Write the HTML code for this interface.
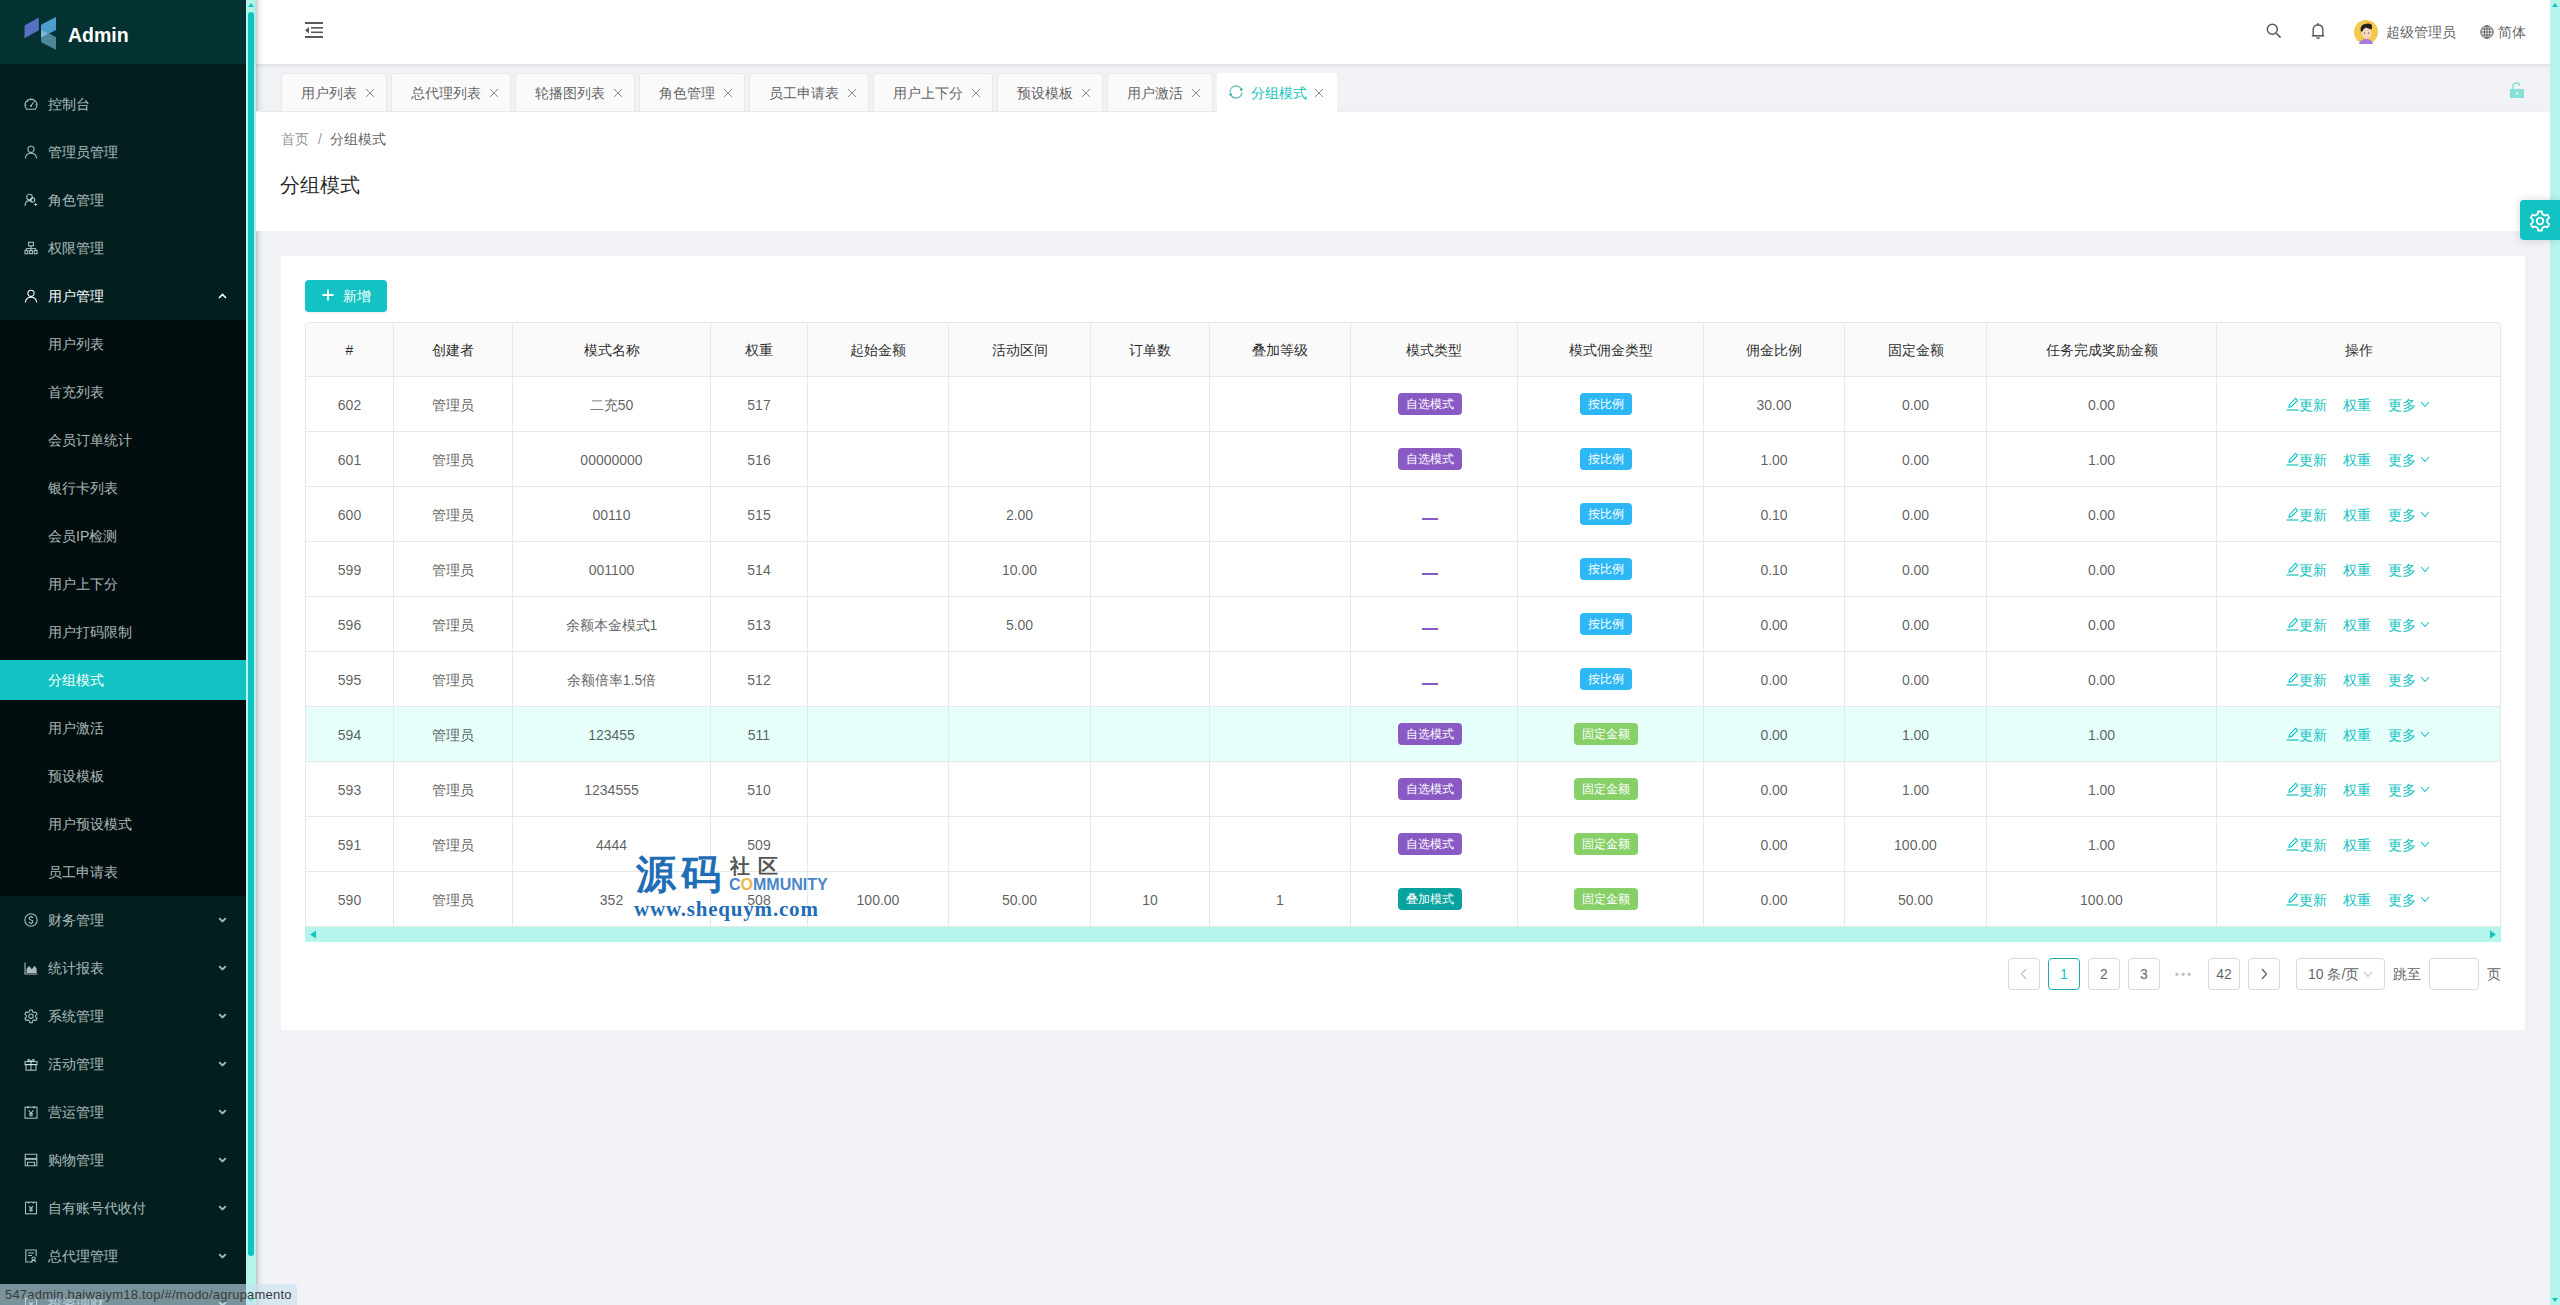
<!DOCTYPE html><html><head><meta charset="utf-8"><title>分组模式</title><style>
*{box-sizing:border-box;margin:0;padding:0}
html,body{width:2560px;height:1305px;overflow:hidden}
body{position:relative;background:#f0f2f5;font-family:"Liberation Sans", sans-serif;font-size:14px;color:rgba(0,0,0,.65)}
.a{position:absolute}
.t{position:absolute;white-space:nowrap;line-height:20px}
.side{left:0;top:0;width:246px;height:1305px;background:#031e1f}
.logo{left:0;top:0;width:246px;height:64px;background:#043232}
.mi{position:absolute;left:0;width:246px;height:40px;line-height:40px;color:rgba(225,240,238,.75);font-size:14px;white-space:nowrap}
.mi .ic{position:absolute;left:24px;top:13px;width:14px;height:14px;overflow:visible}
.mi .tx{position:absolute;left:48px;top:0}
.mi .ar{position:absolute;left:218px;top:17px;width:9px;height:6px}
.hdr{left:256px;top:0;width:2294px;height:64px;background:#fff;box-shadow:0 1px 4px rgba(0,21,41,.12)}
.tab{position:absolute;top:73px;height:39px;background:#fafafa;border:1px solid #e8e8e8;border-bottom:0;border-radius:4px 4px 0 0;color:rgba(0,0,0,.65);font-size:14px}
.tab .tx{position:absolute;left:19px;top:8px;line-height:22px;white-space:nowrap}
.tab .x{position:absolute;top:14px;width:10px;height:10px}
.card{left:281px;top:256px;width:2244px;height:774px;background:#fff}
.cell{position:absolute;text-align:center;white-space:nowrap;line-height:22px}
.tag{position:absolute;height:22px;line-height:22px;border-radius:4px;color:#fff;font-size:12px;text-align:center;white-space:nowrap}
.lk{color:#13c2c2}
.pg{position:absolute;top:958px;width:32px;height:32px;border:1px solid #d9d9d9;border-radius:4px;background:#fff;text-align:center;line-height:30px;color:rgba(0,0,0,.65);font-size:14px}
</style></head><body>
<div class="a side"></div>
<div class="a logo"></div>
<svg class="a" style="left:0;top:0" width="64" height="64" viewBox="0 0 64 64">
<path d="M24.5 25.5 L38.8 17.4 L38.8 30.3 L24.5 38.3 Z" fill="#5670c2"/>
<path d="M41 26 Q41 24.6 42.2 24 L56 17 L56 30 L49.2 33.6 L41 29.2 Z" fill="#4a9fcf"/>
<path d="M41 29.2 L49.2 33.6 L41 38 Z" fill="#79b7df"/>
<path d="M41 38 L49.2 33.6 L56 37.2 L56 49.8 L42.2 42.8 Q41 42.2 41 41 Z" fill="#4d8898"/>
</svg>
<div class="t" style="left:68px;top:22px;line-height:26px;font-size:19.5px;font-weight:bold;color:#fff">Admin</div>
<div class="mi" style="top:84px"><svg class="ic" viewBox="0 0 14 14"><path d="M2.6 12.2 A6 6 0 1 1 11.4 12.2 Z" stroke="currentColor" fill="none" stroke-width="1.1"/><path d="M7 9 L9.5 5.2" stroke="currentColor" fill="none" stroke-width="1.1"/><circle cx="7" cy="9" r="0.9" fill="currentColor"/><path d="M7 2.2v1M3.2 4l.7.7M10.8 4l-.7.7M1.7 8h1M11.3 8h1" stroke="currentColor" fill="none" stroke-width="1.1"/></svg><span class="tx">控制台</span></div>
<div class="mi" style="top:132px"><svg class="ic" viewBox="0 0 14 14"><circle cx="7" cy="4.3" r="3.1" stroke="currentColor" fill="none" stroke-width="1.1"/><path d="M1.3 13.5 Q1.8 8.3 7 8.3 Q12.2 8.3 12.7 13.5" stroke="currentColor" fill="none" stroke-width="1.1"/></svg><span class="tx">管理员管理</span></div>
<div class="mi" style="top:180px"><svg class="ic" viewBox="0 0 14 14"><circle cx="5.5" cy="4" r="2.8" stroke="currentColor" fill="none" stroke-width="1.1"/><path d="M1 13 Q1.3 7.6 5.5 7.6 Q7 7.6 8 8.3" stroke="currentColor" fill="none" stroke-width="1.1"/><circle cx="8.6" cy="7" r="2.1" stroke="currentColor" fill="none" stroke-width="1.1"/><path d="M10 11.5h3.2M11.6 9.9v3.2" stroke="currentColor" fill="none" stroke-width="1.1"/></svg><span class="tx">角色管理</span></div>
<div class="mi" style="top:228px"><svg class="ic" viewBox="0 0 14 14"><rect x="4.6" y="1.3" width="4.8" height="3.6" stroke="currentColor" fill="none" stroke-width="1.1"/><path d="M7 4.9v2.6M2.3 7.5h9.4M2.3 7.5v2M7 7.5v2M11.7 7.5v2" stroke="currentColor" fill="none" stroke-width="1.1"/><rect x="1" y="9.5" width="2.8" height="3.2" stroke="currentColor" fill="none" stroke-width="1.1"/><rect x="5.6" y="9.5" width="2.8" height="3.2" stroke="currentColor" fill="none" stroke-width="1.1"/><rect x="10.2" y="9.5" width="2.8" height="3.2" stroke="currentColor" fill="none" stroke-width="1.1"/></svg><span class="tx">权限管理</span></div>
<div class="mi" style="top:276px;color:#fff"><svg class="ic" viewBox="0 0 14 14"><circle cx="7" cy="4.3" r="3.1" stroke="currentColor" fill="none" stroke-width="1.1"/><path d="M1.3 13.5 Q1.8 8.3 7 8.3 Q12.2 8.3 12.7 13.5" stroke="currentColor" fill="none" stroke-width="1.1"/></svg><span class="tx">用户管理</span><svg class="ar" viewBox="0 0 9 6"><path d="M1 5 L4.5 1.5 L8 5" stroke="#fff" stroke-width="1.6" fill="none"/></svg></div>
<div class="a" style="left:0;top:320px;width:246px;height:576px;background:#010d0e"></div>
<div class="mi" style="top:324px"><span class="tx">用户列表</span></div>
<div class="mi" style="top:372px"><span class="tx">首充列表</span></div>
<div class="mi" style="top:420px"><span class="tx">会员订单统计</span></div>
<div class="mi" style="top:468px"><span class="tx">银行卡列表</span></div>
<div class="mi" style="top:516px"><span class="tx">会员IP检测</span></div>
<div class="mi" style="top:564px"><span class="tx">用户上下分</span></div>
<div class="mi" style="top:612px"><span class="tx">用户打码限制</span></div>
<div class="mi" style="top:660px;background:#13c2c2;color:#fff"><span class="tx">分组模式</span></div>
<div class="mi" style="top:708px"><span class="tx">用户激活</span></div>
<div class="mi" style="top:756px"><span class="tx">预设模板</span></div>
<div class="mi" style="top:804px"><span class="tx">用户预设模式</span></div>
<div class="mi" style="top:852px"><span class="tx">员工申请表</span></div>
<div class="mi" style="top:900px"><svg class="ic" viewBox="0 0 14 14"><circle cx="7" cy="7" r="6.2" stroke="currentColor" fill="none" stroke-width="1.1"/><path d="M9 4.9 Q8.4 3.9 7 3.9 Q5.1 3.9 5.1 5.4 Q5.1 6.6 7 7 Q8.9 7.4 8.9 8.7 Q8.9 10.1 7 10.1 Q5.5 10.1 4.9 9M7 2.8v1.1M7 10.1v1.1" stroke="currentColor" fill="none" stroke-width="1.1"/></svg><span class="tx">财务管理</span><svg class="ar" viewBox="0 0 9 6"><path d="M1.2 1.2 L4.5 4.5 L7.8 1.2" stroke="currentColor" stroke-width="1.8" fill="none"/></svg></div>
<div class="mi" style="top:948px"><svg class="ic" viewBox="0 0 14 14"><path d="M1 1.5v11.5h12.5" stroke="currentColor" fill="none" stroke-width="1.1"/><path d="M2.6 12 V7.5 L5.2 5 L7.8 8.2 L10.5 4.8 L12.6 7.6 V12 Z" fill="currentColor"/></svg><span class="tx">统计报表</span><svg class="ar" viewBox="0 0 9 6"><path d="M1.2 1.2 L4.5 4.5 L7.8 1.2" stroke="currentColor" stroke-width="1.8" fill="none"/></svg></div>
<div class="mi" style="top:996px"><svg class="ic" viewBox="0 0 14 14"><path d="M5.8 1 h2.4 l.4 1.8 1.6.9 1.7-.6 1.2 2.1-1.4 1.2v1.8l1.4 1.2-1.2 2.1-1.7-.6-1.6.9-.4 1.8H5.8l-.4-1.8-1.6-.9-1.7.6L.9 9.3l1.4-1.2V6.3L.9 5.1l1.2-2.1 1.7.6 1.6-.9z" stroke="currentColor" fill="none" stroke-width="1.1"/><circle cx="7" cy="7.2" r="2.2" stroke="currentColor" fill="none" stroke-width="1.1"/></svg><span class="tx">系统管理</span><svg class="ar" viewBox="0 0 9 6"><path d="M1.2 1.2 L4.5 4.5 L7.8 1.2" stroke="currentColor" stroke-width="1.8" fill="none"/></svg></div>
<div class="mi" style="top:1044px"><svg class="ic" viewBox="0 0 14 14"><rect x="1" y="4.6" width="12" height="3" stroke="currentColor" fill="none" stroke-width="1.1"/><rect x="2" y="7.6" width="10" height="5.6" stroke="currentColor" fill="none" stroke-width="1.1"/><path d="M7 4.6v8.6M7 4.6 Q4.2 1 3.8 3.2 Q3.6 4.4 7 4.6 Q10.4 4.4 10.2 3.2 Q9.8 1 7 4.6" stroke="currentColor" fill="none" stroke-width="1.1"/></svg><span class="tx">活动管理</span><svg class="ar" viewBox="0 0 9 6"><path d="M1.2 1.2 L4.5 4.5 L7.8 1.2" stroke="currentColor" stroke-width="1.8" fill="none"/></svg></div>
<div class="mi" style="top:1092px"><svg class="ic" viewBox="0 0 14 14"><rect x="1" y="2.2" width="12" height="11" stroke="currentColor" fill="none" stroke-width="1.1"/><path d="M4 1v2.4M10 1v2.4M4.6 5.4 7 8 9.4 5.4M7 8v3.6M5 8.6h4M5 10.2h4" stroke="currentColor" fill="none" stroke-width="1.1"/></svg><span class="tx">营运管理</span><svg class="ar" viewBox="0 0 9 6"><path d="M1.2 1.2 L4.5 4.5 L7.8 1.2" stroke="currentColor" stroke-width="1.8" fill="none"/></svg></div>
<div class="mi" style="top:1140px"><svg class="ic" viewBox="0 0 14 14"><path d="M1.2 1.2h11.6v11.6H1.2z" stroke="currentColor" fill="none" stroke-width="1.1"/><path d="M1.2 5.6h11.6M1.2 5.6 Q2.7 7.4 4.1 5.6 Q5.6 7.4 7 5.6 Q8.4 7.4 9.9 5.6 Q11.3 7.4 12.8 5.6M3.5 12.8V9.2h7v3.6" stroke="currentColor" fill="none" stroke-width="1.1"/></svg><span class="tx">购物管理</span><svg class="ar" viewBox="0 0 9 6"><path d="M1.2 1.2 L4.5 4.5 L7.8 1.2" stroke="currentColor" stroke-width="1.8" fill="none"/></svg></div>
<div class="mi" style="top:1188px"><svg class="ic" viewBox="0 0 14 14"><rect x="1.5" y="1.2" width="11" height="11.6" stroke="currentColor" fill="none" stroke-width="1.1"/><path d="M4.6 1v1.6M9.4 1v1.6M5 5.2 7 7.4 9 5.2M7 7.4v3.4M5.2 8h3.6M5.2 9.5h3.6" stroke="currentColor" fill="none" stroke-width="1.1"/></svg><span class="tx">自有账号代收付</span><svg class="ar" viewBox="0 0 9 6"><path d="M1.2 1.2 L4.5 4.5 L7.8 1.2" stroke="currentColor" stroke-width="1.8" fill="none"/></svg></div>
<div class="mi" style="top:1236px"><svg class="ic" viewBox="0 0 14 14"><path d="M8.5 13H1.8V1h10.4v6.2" stroke="currentColor" fill="none" stroke-width="1.1"/><path d="M4 4h6M4 6.5h4" stroke="currentColor" fill="none" stroke-width="1.1"/><circle cx="9.6" cy="9.6" r="1.6" stroke="currentColor" fill="none" stroke-width="1.1"/><path d="M7.4 13.2 Q7.6 11.4 9.6 11.4 Q11.6 11.4 11.8 13.2" stroke="currentColor" fill="none" stroke-width="1.1"/></svg><span class="tx">总代理管理</span><svg class="ar" viewBox="0 0 9 6"><path d="M1.2 1.2 L4.5 4.5 L7.8 1.2" stroke="currentColor" stroke-width="1.8" fill="none"/></svg></div>
<div class="mi" style="top:1284px"><svg class="ic" viewBox="0 0 14 14"><rect x="1.5" y="1.2" width="11" height="11.6" stroke="currentColor" fill="none" stroke-width="1.1"/><path d="M4.6 1v1.6M9.4 1v1.6M5 5.2 7 7.4 9 5.2M7 7.4v3.4M5.2 8h3.6M5.2 9.5h3.6" stroke="currentColor" fill="none" stroke-width="1.1"/></svg><span class="tx">投资理财</span><svg class="ar" viewBox="0 0 9 6"><path d="M1.2 1.2 L4.5 4.5 L7.8 1.2" stroke="currentColor" stroke-width="1.8" fill="none"/></svg></div>
<div class="a" style="left:246px;top:0;width:10px;height:1305px;background:#b5f5ec"></div>
<div class="a" style="left:248px;top:12px;width:6px;height:1244px;background:#13c2c2;border-radius:3px"></div>
<svg class="a" style="left:246px;top:0" width="10" height="10"><path d="M2 7 L5 3 L8 7 Z" fill="#13c2c2"/></svg>
<svg class="a" style="left:246px;top:1295px" width="10" height="10"><path d="M2 3 L5 7 L8 3 Z" fill="#13c2c2"/></svg>
<div class="a hdr"></div>
<div class="a" style="left:256px;top:0;width:8px;height:1305px;background:linear-gradient(to right,rgba(0,30,45,.22),rgba(0,21,41,.06) 40%,rgba(0,21,41,0))"></div>
<svg class="a" style="left:305px;top:22px" width="18" height="16" viewBox="0 0 18 16" fill="#595959">
<rect x="0" y="0" width="18" height="2"/><rect x="6" y="5" width="12" height="1.6"/><rect x="6" y="9.5" width="12" height="1.6"/><rect x="0" y="14" width="18" height="2"/><path d="M4 5 L0 8.2 L4 11.4 Z"/></svg>
<svg class="a" style="left:2266px;top:23px" width="16" height="16" viewBox="0 0 16 16"><circle cx="6.3" cy="6.3" r="5" stroke="#595959" stroke-width="1.5" fill="none"/><path d="M10 10 L14.6 14.6" stroke="#595959" stroke-width="1.6"/></svg>
<svg class="a" style="left:2311px;top:22px" width="14" height="18" viewBox="0 0 14 18"><path d="M2.2 13.6 V7.6 Q2.2 3 7 3 Q11.8 3 11.8 7.6 V13.6 Z" stroke="#595959" stroke-width="1.4" fill="none"/><path d="M0.8 13.8 H13.2" stroke="#595959" stroke-width="1.4"/><path d="M7 1 V3" stroke="#595959" stroke-width="1.4"/><path d="M5.4 15.4 Q7 17.4 8.6 15.4" stroke="#595959" stroke-width="1.4" fill="none"/></svg>
<svg class="a" style="left:2354px;top:20px" width="24" height="24" viewBox="0 0 24 24">
<circle cx="12" cy="12" r="12" fill="#f2c94c"/>
<path d="M5 24 Q6 19 12 19 Q18 19 19 24 Z" fill="#a47de0"/>
<ellipse cx="12.5" cy="13" rx="5" ry="5.8" fill="#f9d6c0"/>
<path d="M6.6 11 Q5.8 5 11 4 Q15 3 17.6 4.6 Q18.6 7 17.6 9.6 Q14 8.6 12 7.6 Q9 9 8 12 Z" fill="#222"/>
<circle cx="10.6" cy="13" r=".6" fill="#222"/><circle cx="14.6" cy="13" r=".6" fill="#222"/>
</svg>
<div class="t" style="left:2386px;top:22px;color:rgba(0,0,0,.65)">超级管理员</div>
<svg class="a" style="left:2480px;top:25px" width="14" height="14" viewBox="0 0 14 14" fill="none" stroke="#595959" stroke-width="1"><circle cx="7" cy="7" r="6.2"/><ellipse cx="7" cy="7" rx="2.8" ry="6.2"/><path d="M1 7h12M1.8 4h10.4M1.8 10h10.4M7 .8v12.4"/></svg>
<div class="t" style="left:2498px;top:22px;color:rgba(0,0,0,.65)">简体</div>
<div class="tab" style="left:281px;width:106px"><span class="tx">用户列表</span><svg class="x" style="left:83px" viewBox="0 0 10 10"><path d="M1 1 L9 9 M9 1 L1 9" stroke="#8a8a8a" stroke-width="1" fill="none"/></svg></div>
<div class="tab" style="left:391px;width:120px"><span class="tx">总代理列表</span><svg class="x" style="left:97px" viewBox="0 0 10 10"><path d="M1 1 L9 9 M9 1 L1 9" stroke="#8a8a8a" stroke-width="1" fill="none"/></svg></div>
<div class="tab" style="left:515px;width:120px"><span class="tx">轮播图列表</span><svg class="x" style="left:97px" viewBox="0 0 10 10"><path d="M1 1 L9 9 M9 1 L1 9" stroke="#8a8a8a" stroke-width="1" fill="none"/></svg></div>
<div class="tab" style="left:639px;width:106px"><span class="tx">角色管理</span><svg class="x" style="left:83px" viewBox="0 0 10 10"><path d="M1 1 L9 9 M9 1 L1 9" stroke="#8a8a8a" stroke-width="1" fill="none"/></svg></div>
<div class="tab" style="left:749px;width:120px"><span class="tx">员工申请表</span><svg class="x" style="left:97px" viewBox="0 0 10 10"><path d="M1 1 L9 9 M9 1 L1 9" stroke="#8a8a8a" stroke-width="1" fill="none"/></svg></div>
<div class="tab" style="left:873px;width:120px"><span class="tx">用户上下分</span><svg class="x" style="left:97px" viewBox="0 0 10 10"><path d="M1 1 L9 9 M9 1 L1 9" stroke="#8a8a8a" stroke-width="1" fill="none"/></svg></div>
<div class="tab" style="left:997px;width:106px"><span class="tx">预设模板</span><svg class="x" style="left:83px" viewBox="0 0 10 10"><path d="M1 1 L9 9 M9 1 L1 9" stroke="#8a8a8a" stroke-width="1" fill="none"/></svg></div>
<div class="tab" style="left:1107px;width:106px"><span class="tx">用户激活</span><svg class="x" style="left:83px" viewBox="0 0 10 10"><path d="M1 1 L9 9 M9 1 L1 9" stroke="#8a8a8a" stroke-width="1" fill="none"/></svg></div>
<div class="tab" style="left:1217px;width:120px;background:#fff;border-color:#fff;height:40px"><svg class="a" style="left:-1px;top:-1px" width="40" height="38" viewBox="0 0 40 38" fill="none" stroke="#5fb8b3" stroke-width="1.3"><path d="M13.2 19.5 A5.8 5.8 0 0 1 24.3 16.5"/><path d="M24.8 19.5 A5.8 5.8 0 0 1 13.7 21.5"/><circle cx="24.3" cy="16.5" r=".9" fill="#5fb8b3"/><circle cx="13.7" cy="21.5" r=".9" fill="#5fb8b3"/></svg><span class="tx" style="left:33px;color:#13c2c2">分组模式</span><svg class="x" style="left:96px" viewBox="0 0 10 10"><path d="M1 1 L9 9 M9 1 L1 9" stroke="#8a8a8a" stroke-width="1" fill="none"/></svg></div>
<div class="a" style="left:256px;top:111px;width:961px;height:1px;background:#e8e8e8"></div>
<div class="a" style="left:1337px;top:111px;width:1213px;height:1px;background:#eaecef"></div>
<svg class="a" style="left:2510px;top:82px" width="14" height="16" viewBox="0 0 14 16"><path d="M3 7 V4.2 Q3 1 6.4 1 Q9.6 1 9.8 3.6" stroke="#87e0d8" stroke-width="1.6" fill="none"/><rect x="0" y="7" width="14" height="9" rx="0.5" fill="#87e0d8"/><rect x="6.2" y="10.2" width="1.6" height="2.2" fill="#fff"/></svg>
<div class="a" style="left:256px;top:112px;width:2294px;height:119px;background:#fff"></div>
<div class="t" style="left:281px;top:129px;color:rgba(0,0,0,.45)">首页</div>
<div class="t" style="left:318px;top:129px;color:rgba(0,0,0,.45)">/</div>
<div class="t" style="left:330px;top:129px;color:rgba(0,0,0,.65)">分组模式</div>
<div class="t" style="left:280px;top:170px;font-size:20px;line-height:30px;color:rgba(0,0,0,.85)">分组模式</div>
<div class="a card"></div>
<div class="a" style="left:305px;top:280px;width:82px;height:32px;background:#13c2c2;border-radius:4px;box-shadow:0 2px 0 rgba(0,0,0,.045)"></div>
<svg class="a" style="left:322px;top:289px" width="12" height="12" viewBox="0 0 12 12"><path d="M6 0.5 V11.5 M0.5 6 H11.5" stroke="#fff" stroke-width="1.8"/></svg>
<div class="t" style="left:343px;top:286px;color:#fff">新增</div>
<div class="a" style="left:305px;top:322px;width:2196px;height:605px;border:1px solid #e8e8e8;border-bottom:0;border-radius:4px 4px 0 0;background:#fff;overflow:hidden"><div class="a" style="left:0;top:0;width:2196px;height:54px;background:#fafafa"></div><div class="a" style="left:0;top:384px;width:2196px;height:54px;background:#e6fffb"></div></div>
<div class="a" style="left:306px;top:376px;width:2194px;height:1px;background:#e8e8e8"></div>
<div class="a" style="left:306px;top:431px;width:2194px;height:1px;background:#e8e8e8"></div>
<div class="a" style="left:306px;top:486px;width:2194px;height:1px;background:#e8e8e8"></div>
<div class="a" style="left:306px;top:541px;width:2194px;height:1px;background:#e8e8e8"></div>
<div class="a" style="left:306px;top:596px;width:2194px;height:1px;background:#e8e8e8"></div>
<div class="a" style="left:306px;top:651px;width:2194px;height:1px;background:#e8e8e8"></div>
<div class="a" style="left:306px;top:706px;width:2194px;height:1px;background:#e8e8e8"></div>
<div class="a" style="left:306px;top:761px;width:2194px;height:1px;background:#e8e8e8"></div>
<div class="a" style="left:306px;top:816px;width:2194px;height:1px;background:#e8e8e8"></div>
<div class="a" style="left:306px;top:871px;width:2194px;height:1px;background:#e8e8e8"></div>
<div class="a" style="left:306px;top:926px;width:2194px;height:1px;background:#e8e8e8"></div>
<div class="a" style="left:393px;top:323px;width:1px;height:604px;background:#e8e8e8"></div>
<div class="a" style="left:512px;top:323px;width:1px;height:604px;background:#e8e8e8"></div>
<div class="a" style="left:710px;top:323px;width:1px;height:604px;background:#e8e8e8"></div>
<div class="a" style="left:807px;top:323px;width:1px;height:604px;background:#e8e8e8"></div>
<div class="a" style="left:948px;top:323px;width:1px;height:604px;background:#e8e8e8"></div>
<div class="a" style="left:1090px;top:323px;width:1px;height:604px;background:#e8e8e8"></div>
<div class="a" style="left:1209px;top:323px;width:1px;height:604px;background:#e8e8e8"></div>
<div class="a" style="left:1350px;top:323px;width:1px;height:604px;background:#e8e8e8"></div>
<div class="a" style="left:1517px;top:323px;width:1px;height:604px;background:#e8e8e8"></div>
<div class="a" style="left:1703px;top:323px;width:1px;height:604px;background:#e8e8e8"></div>
<div class="a" style="left:1844px;top:323px;width:1px;height:604px;background:#e8e8e8"></div>
<div class="a" style="left:1986px;top:323px;width:1px;height:604px;background:#e8e8e8"></div>
<div class="a" style="left:2216px;top:323px;width:1px;height:604px;background:#e8e8e8"></div>
<div class="cell" style="left:306px;top:339px;width:87px;color:rgba(0,0,0,.85)">#</div>
<div class="cell" style="left:394px;top:339px;width:118px;color:rgba(0,0,0,.85)">创建者</div>
<div class="cell" style="left:513px;top:339px;width:197px;color:rgba(0,0,0,.85)">模式名称</div>
<div class="cell" style="left:711px;top:339px;width:96px;color:rgba(0,0,0,.85)">权重</div>
<div class="cell" style="left:808px;top:339px;width:140px;color:rgba(0,0,0,.85)">起始金额</div>
<div class="cell" style="left:949px;top:339px;width:141px;color:rgba(0,0,0,.85)">活动区间</div>
<div class="cell" style="left:1091px;top:339px;width:118px;color:rgba(0,0,0,.85)">订单数</div>
<div class="cell" style="left:1210px;top:339px;width:140px;color:rgba(0,0,0,.85)">叠加等级</div>
<div class="cell" style="left:1351px;top:339px;width:166px;color:rgba(0,0,0,.85)">模式类型</div>
<div class="cell" style="left:1518px;top:339px;width:185px;color:rgba(0,0,0,.85)">模式佣金类型</div>
<div class="cell" style="left:1704px;top:339px;width:140px;color:rgba(0,0,0,.85)">佣金比例</div>
<div class="cell" style="left:1845px;top:339px;width:141px;color:rgba(0,0,0,.85)">固定金额</div>
<div class="cell" style="left:1987px;top:339px;width:229px;color:rgba(0,0,0,.85)">任务完成奖励金额</div>
<div class="cell" style="left:2217px;top:339px;width:283px;color:rgba(0,0,0,.85)">操作</div>
<div class="cell" style="left:306px;top:394px;width:87px">602</div>
<div class="cell" style="left:394px;top:394px;width:118px">管理员</div>
<div class="cell" style="left:513px;top:394px;width:197px">二充50</div>
<div class="cell" style="left:711px;top:394px;width:96px">517</div>
<div class="tag" style="left:1398px;top:393px;width:64px;background:#8a5ac4">自选模式</div>
<div class="tag" style="left:1580px;top:393px;width:52px;background:#2db7f5">按比例</div>
<div class="cell" style="left:1704px;top:394px;width:140px">30.00</div>
<div class="cell" style="left:1845px;top:394px;width:141px">0.00</div>
<div class="cell" style="left:1987px;top:394px;width:229px">0.00</div>
<svg class="a" style="left:2286px;top:397px" width="13" height="14" viewBox="0 0 13 14"><path d="M3 10.2 L3.6 7.4 L9.6 1.4 L11.6 3.4 L5.6 9.4 Z" stroke="#13c2c2" stroke-width="1.1" fill="none"/><path d="M0.5 13 H12.5" stroke="#13c2c2" stroke-width="1.2"/></svg>
<div class="t lk" style="left:2299px;top:395px">更新</div>
<div class="t lk" style="left:2343px;top:395px">权重</div>
<div class="t lk" style="left:2388px;top:395px">更多</div>
<svg class="a" style="left:2420px;top:401px" width="10" height="7" viewBox="0 0 10 7"><path d="M1 1 L5 5.5 L9 1" stroke="#13c2c2" stroke-width="1.1" fill="none"/></svg>
<div class="cell" style="left:306px;top:449px;width:87px">601</div>
<div class="cell" style="left:394px;top:449px;width:118px">管理员</div>
<div class="cell" style="left:513px;top:449px;width:197px">00000000</div>
<div class="cell" style="left:711px;top:449px;width:96px">516</div>
<div class="tag" style="left:1398px;top:448px;width:64px;background:#8a5ac4">自选模式</div>
<div class="tag" style="left:1580px;top:448px;width:52px;background:#2db7f5">按比例</div>
<div class="cell" style="left:1704px;top:449px;width:140px">1.00</div>
<div class="cell" style="left:1845px;top:449px;width:141px">0.00</div>
<div class="cell" style="left:1987px;top:449px;width:229px">1.00</div>
<svg class="a" style="left:2286px;top:452px" width="13" height="14" viewBox="0 0 13 14"><path d="M3 10.2 L3.6 7.4 L9.6 1.4 L11.6 3.4 L5.6 9.4 Z" stroke="#13c2c2" stroke-width="1.1" fill="none"/><path d="M0.5 13 H12.5" stroke="#13c2c2" stroke-width="1.2"/></svg>
<div class="t lk" style="left:2299px;top:450px">更新</div>
<div class="t lk" style="left:2343px;top:450px">权重</div>
<div class="t lk" style="left:2388px;top:450px">更多</div>
<svg class="a" style="left:2420px;top:456px" width="10" height="7" viewBox="0 0 10 7"><path d="M1 1 L5 5.5 L9 1" stroke="#13c2c2" stroke-width="1.1" fill="none"/></svg>
<div class="cell" style="left:306px;top:504px;width:87px">600</div>
<div class="cell" style="left:394px;top:504px;width:118px">管理员</div>
<div class="cell" style="left:513px;top:504px;width:197px">00110</div>
<div class="cell" style="left:711px;top:504px;width:96px">515</div>
<div class="cell" style="left:949px;top:504px;width:141px">2.00</div>
<div class="a" style="left:1422px;top:518px;width:16px;height:2px;background:#8a5ac4"></div>
<div class="tag" style="left:1580px;top:503px;width:52px;background:#2db7f5">按比例</div>
<div class="cell" style="left:1704px;top:504px;width:140px">0.10</div>
<div class="cell" style="left:1845px;top:504px;width:141px">0.00</div>
<div class="cell" style="left:1987px;top:504px;width:229px">0.00</div>
<svg class="a" style="left:2286px;top:507px" width="13" height="14" viewBox="0 0 13 14"><path d="M3 10.2 L3.6 7.4 L9.6 1.4 L11.6 3.4 L5.6 9.4 Z" stroke="#13c2c2" stroke-width="1.1" fill="none"/><path d="M0.5 13 H12.5" stroke="#13c2c2" stroke-width="1.2"/></svg>
<div class="t lk" style="left:2299px;top:505px">更新</div>
<div class="t lk" style="left:2343px;top:505px">权重</div>
<div class="t lk" style="left:2388px;top:505px">更多</div>
<svg class="a" style="left:2420px;top:511px" width="10" height="7" viewBox="0 0 10 7"><path d="M1 1 L5 5.5 L9 1" stroke="#13c2c2" stroke-width="1.1" fill="none"/></svg>
<div class="cell" style="left:306px;top:559px;width:87px">599</div>
<div class="cell" style="left:394px;top:559px;width:118px">管理员</div>
<div class="cell" style="left:513px;top:559px;width:197px">001100</div>
<div class="cell" style="left:711px;top:559px;width:96px">514</div>
<div class="cell" style="left:949px;top:559px;width:141px">10.00</div>
<div class="a" style="left:1422px;top:573px;width:16px;height:2px;background:#8a5ac4"></div>
<div class="tag" style="left:1580px;top:558px;width:52px;background:#2db7f5">按比例</div>
<div class="cell" style="left:1704px;top:559px;width:140px">0.10</div>
<div class="cell" style="left:1845px;top:559px;width:141px">0.00</div>
<div class="cell" style="left:1987px;top:559px;width:229px">0.00</div>
<svg class="a" style="left:2286px;top:562px" width="13" height="14" viewBox="0 0 13 14"><path d="M3 10.2 L3.6 7.4 L9.6 1.4 L11.6 3.4 L5.6 9.4 Z" stroke="#13c2c2" stroke-width="1.1" fill="none"/><path d="M0.5 13 H12.5" stroke="#13c2c2" stroke-width="1.2"/></svg>
<div class="t lk" style="left:2299px;top:560px">更新</div>
<div class="t lk" style="left:2343px;top:560px">权重</div>
<div class="t lk" style="left:2388px;top:560px">更多</div>
<svg class="a" style="left:2420px;top:566px" width="10" height="7" viewBox="0 0 10 7"><path d="M1 1 L5 5.5 L9 1" stroke="#13c2c2" stroke-width="1.1" fill="none"/></svg>
<div class="cell" style="left:306px;top:614px;width:87px">596</div>
<div class="cell" style="left:394px;top:614px;width:118px">管理员</div>
<div class="cell" style="left:513px;top:614px;width:197px">余额本金模式1</div>
<div class="cell" style="left:711px;top:614px;width:96px">513</div>
<div class="cell" style="left:949px;top:614px;width:141px">5.00</div>
<div class="a" style="left:1422px;top:628px;width:16px;height:2px;background:#8a5ac4"></div>
<div class="tag" style="left:1580px;top:613px;width:52px;background:#2db7f5">按比例</div>
<div class="cell" style="left:1704px;top:614px;width:140px">0.00</div>
<div class="cell" style="left:1845px;top:614px;width:141px">0.00</div>
<div class="cell" style="left:1987px;top:614px;width:229px">0.00</div>
<svg class="a" style="left:2286px;top:617px" width="13" height="14" viewBox="0 0 13 14"><path d="M3 10.2 L3.6 7.4 L9.6 1.4 L11.6 3.4 L5.6 9.4 Z" stroke="#13c2c2" stroke-width="1.1" fill="none"/><path d="M0.5 13 H12.5" stroke="#13c2c2" stroke-width="1.2"/></svg>
<div class="t lk" style="left:2299px;top:615px">更新</div>
<div class="t lk" style="left:2343px;top:615px">权重</div>
<div class="t lk" style="left:2388px;top:615px">更多</div>
<svg class="a" style="left:2420px;top:621px" width="10" height="7" viewBox="0 0 10 7"><path d="M1 1 L5 5.5 L9 1" stroke="#13c2c2" stroke-width="1.1" fill="none"/></svg>
<div class="cell" style="left:306px;top:669px;width:87px">595</div>
<div class="cell" style="left:394px;top:669px;width:118px">管理员</div>
<div class="cell" style="left:513px;top:669px;width:197px">余额倍率1.5倍</div>
<div class="cell" style="left:711px;top:669px;width:96px">512</div>
<div class="a" style="left:1422px;top:683px;width:16px;height:2px;background:#8a5ac4"></div>
<div class="tag" style="left:1580px;top:668px;width:52px;background:#2db7f5">按比例</div>
<div class="cell" style="left:1704px;top:669px;width:140px">0.00</div>
<div class="cell" style="left:1845px;top:669px;width:141px">0.00</div>
<div class="cell" style="left:1987px;top:669px;width:229px">0.00</div>
<svg class="a" style="left:2286px;top:672px" width="13" height="14" viewBox="0 0 13 14"><path d="M3 10.2 L3.6 7.4 L9.6 1.4 L11.6 3.4 L5.6 9.4 Z" stroke="#13c2c2" stroke-width="1.1" fill="none"/><path d="M0.5 13 H12.5" stroke="#13c2c2" stroke-width="1.2"/></svg>
<div class="t lk" style="left:2299px;top:670px">更新</div>
<div class="t lk" style="left:2343px;top:670px">权重</div>
<div class="t lk" style="left:2388px;top:670px">更多</div>
<svg class="a" style="left:2420px;top:676px" width="10" height="7" viewBox="0 0 10 7"><path d="M1 1 L5 5.5 L9 1" stroke="#13c2c2" stroke-width="1.1" fill="none"/></svg>
<div class="cell" style="left:306px;top:724px;width:87px">594</div>
<div class="cell" style="left:394px;top:724px;width:118px">管理员</div>
<div class="cell" style="left:513px;top:724px;width:197px">123455</div>
<div class="cell" style="left:711px;top:724px;width:96px">511</div>
<div class="tag" style="left:1398px;top:723px;width:64px;background:#8a5ac4">自选模式</div>
<div class="tag" style="left:1574px;top:723px;width:64px;background:#87d068">固定金额</div>
<div class="cell" style="left:1704px;top:724px;width:140px">0.00</div>
<div class="cell" style="left:1845px;top:724px;width:141px">1.00</div>
<div class="cell" style="left:1987px;top:724px;width:229px">1.00</div>
<svg class="a" style="left:2286px;top:727px" width="13" height="14" viewBox="0 0 13 14"><path d="M3 10.2 L3.6 7.4 L9.6 1.4 L11.6 3.4 L5.6 9.4 Z" stroke="#13c2c2" stroke-width="1.1" fill="none"/><path d="M0.5 13 H12.5" stroke="#13c2c2" stroke-width="1.2"/></svg>
<div class="t lk" style="left:2299px;top:725px">更新</div>
<div class="t lk" style="left:2343px;top:725px">权重</div>
<div class="t lk" style="left:2388px;top:725px">更多</div>
<svg class="a" style="left:2420px;top:731px" width="10" height="7" viewBox="0 0 10 7"><path d="M1 1 L5 5.5 L9 1" stroke="#13c2c2" stroke-width="1.1" fill="none"/></svg>
<div class="cell" style="left:306px;top:779px;width:87px">593</div>
<div class="cell" style="left:394px;top:779px;width:118px">管理员</div>
<div class="cell" style="left:513px;top:779px;width:197px">1234555</div>
<div class="cell" style="left:711px;top:779px;width:96px">510</div>
<div class="tag" style="left:1398px;top:778px;width:64px;background:#8a5ac4">自选模式</div>
<div class="tag" style="left:1574px;top:778px;width:64px;background:#87d068">固定金额</div>
<div class="cell" style="left:1704px;top:779px;width:140px">0.00</div>
<div class="cell" style="left:1845px;top:779px;width:141px">1.00</div>
<div class="cell" style="left:1987px;top:779px;width:229px">1.00</div>
<svg class="a" style="left:2286px;top:782px" width="13" height="14" viewBox="0 0 13 14"><path d="M3 10.2 L3.6 7.4 L9.6 1.4 L11.6 3.4 L5.6 9.4 Z" stroke="#13c2c2" stroke-width="1.1" fill="none"/><path d="M0.5 13 H12.5" stroke="#13c2c2" stroke-width="1.2"/></svg>
<div class="t lk" style="left:2299px;top:780px">更新</div>
<div class="t lk" style="left:2343px;top:780px">权重</div>
<div class="t lk" style="left:2388px;top:780px">更多</div>
<svg class="a" style="left:2420px;top:786px" width="10" height="7" viewBox="0 0 10 7"><path d="M1 1 L5 5.5 L9 1" stroke="#13c2c2" stroke-width="1.1" fill="none"/></svg>
<div class="cell" style="left:306px;top:834px;width:87px">591</div>
<div class="cell" style="left:394px;top:834px;width:118px">管理员</div>
<div class="cell" style="left:513px;top:834px;width:197px">4444</div>
<div class="cell" style="left:711px;top:834px;width:96px">509</div>
<div class="tag" style="left:1398px;top:833px;width:64px;background:#8a5ac4">自选模式</div>
<div class="tag" style="left:1574px;top:833px;width:64px;background:#87d068">固定金额</div>
<div class="cell" style="left:1704px;top:834px;width:140px">0.00</div>
<div class="cell" style="left:1845px;top:834px;width:141px">100.00</div>
<div class="cell" style="left:1987px;top:834px;width:229px">1.00</div>
<svg class="a" style="left:2286px;top:837px" width="13" height="14" viewBox="0 0 13 14"><path d="M3 10.2 L3.6 7.4 L9.6 1.4 L11.6 3.4 L5.6 9.4 Z" stroke="#13c2c2" stroke-width="1.1" fill="none"/><path d="M0.5 13 H12.5" stroke="#13c2c2" stroke-width="1.2"/></svg>
<div class="t lk" style="left:2299px;top:835px">更新</div>
<div class="t lk" style="left:2343px;top:835px">权重</div>
<div class="t lk" style="left:2388px;top:835px">更多</div>
<svg class="a" style="left:2420px;top:841px" width="10" height="7" viewBox="0 0 10 7"><path d="M1 1 L5 5.5 L9 1" stroke="#13c2c2" stroke-width="1.1" fill="none"/></svg>
<div class="cell" style="left:306px;top:889px;width:87px">590</div>
<div class="cell" style="left:394px;top:889px;width:118px">管理员</div>
<div class="cell" style="left:513px;top:889px;width:197px">352</div>
<div class="cell" style="left:711px;top:889px;width:96px">508</div>
<div class="cell" style="left:808px;top:889px;width:140px">100.00</div>
<div class="cell" style="left:949px;top:889px;width:141px">50.00</div>
<div class="cell" style="left:1091px;top:889px;width:118px">10</div>
<div class="cell" style="left:1210px;top:889px;width:140px">1</div>
<div class="tag" style="left:1398px;top:888px;width:64px;background:#08a39f">叠加模式</div>
<div class="tag" style="left:1574px;top:888px;width:64px;background:#87d068">固定金额</div>
<div class="cell" style="left:1704px;top:889px;width:140px">0.00</div>
<div class="cell" style="left:1845px;top:889px;width:141px">50.00</div>
<div class="cell" style="left:1987px;top:889px;width:229px">100.00</div>
<svg class="a" style="left:2286px;top:892px" width="13" height="14" viewBox="0 0 13 14"><path d="M3 10.2 L3.6 7.4 L9.6 1.4 L11.6 3.4 L5.6 9.4 Z" stroke="#13c2c2" stroke-width="1.1" fill="none"/><path d="M0.5 13 H12.5" stroke="#13c2c2" stroke-width="1.2"/></svg>
<div class="t lk" style="left:2299px;top:890px">更新</div>
<div class="t lk" style="left:2343px;top:890px">权重</div>
<div class="t lk" style="left:2388px;top:890px">更多</div>
<svg class="a" style="left:2420px;top:896px" width="10" height="7" viewBox="0 0 10 7"><path d="M1 1 L5 5.5 L9 1" stroke="#13c2c2" stroke-width="1.1" fill="none"/></svg>
<div class="a" style="left:305px;top:927px;width:2196px;height:15px;background:#b5f5ec"></div>
<svg class="a" style="left:305px;top:927px" width="16" height="15"><path d="M5 7.5 L11 3.5 L11 11.5 Z" fill="#13c2c2"/></svg>
<svg class="a" style="left:2485px;top:927px" width="16" height="15"><path d="M11 7.5 L5 3.5 L5 11.5 Z" fill="#13c2c2"/></svg>
<div class="pg" style="left:2008px"><svg width="10" height="12" viewBox="0 0 10 12" style="margin-top:9px"><path d="M7 1 L2.5 6 L7 11" stroke="#bfbfbf" stroke-width="1.2" fill="none"/></svg></div>
<div class="pg" style="left:2048px;border-color:#1fa9aa;color:#13c2c2">1</div>
<div class="pg" style="left:2088px">2</div>
<div class="pg" style="left:2128px">3</div>
<div class="t" style="left:2168px;top:965px;width:32px;text-align:center;color:rgba(0,0,0,.25);letter-spacing:2px;font-size:12px">&#8226;&#8226;&#8226;</div>
<div class="pg" style="left:2208px">42</div>
<div class="pg" style="left:2248px"><svg width="10" height="12" viewBox="0 0 10 12" style="margin-top:9px"><path d="M3 1 L7.5 6 L3 11" stroke="#595959" stroke-width="1.2" fill="none"/></svg></div>
<div class="pg" style="left:2296px;width:89px;text-align:left;padding-left:11px">10 条/页<svg class="a" style="left:66px;top:12px" width="10" height="7" viewBox="0 0 10 7"><path d="M1 1 L5 5.5 L9 1" stroke="#bfbfbf" stroke-width="1.1" fill="none"/></svg></div>
<div class="t" style="left:2393px;top:964px">跳至</div>
<div class="pg" style="left:2429px;width:50px"></div>
<div class="t" style="left:2487px;top:964px">页</div>
<div class="t" style="left:636px;top:850px;font-size:40px;line-height:48px;font-weight:bold;color:#1f6db5;letter-spacing:5px">源码</div>
<div class="t" style="left:730px;top:854px;font-size:20px;line-height:24px;font-weight:bold;color:#555;letter-spacing:8px">社区</div>
<div class="t" style="left:729px;top:876px;font-size:16px;line-height:18px;font-weight:bold;color:#4a86c8">C<span style="color:#f0b84a">O</span>MMUNITY</div>
<div class="t" style="left:634px;top:896px;font-family:'Liberation Serif',serif;font-size:21px;line-height:26px;letter-spacing:.8px;font-weight:bold;color:#1f6db5">www.shequym.com</div>
<div class="a" style="left:2550px;top:0;width:10px;height:1305px;background:#b5f5ec"></div>
<svg class="a" style="left:2550px;top:0" width="10" height="10"><path d="M2 7 L5 3 L8 7 Z" fill="#13c2c2"/></svg>
<svg class="a" style="left:2550px;top:1295px" width="10" height="10"><path d="M2 3 L5 7 L8 3 Z" fill="#13c2c2"/></svg>
<div class="a" style="left:2520px;top:200px;width:40px;height:40px;background:#13c2c2;border-radius:4px 0 0 4px;box-shadow:0 0 8px rgba(0,0,0,.15)"></div>
<svg class="a" style="left:2529px;top:210px" width="22" height="22" viewBox="0 0 22 22" fill="none" stroke="#fff" stroke-width="1.8"><path d="M9.2 1.5h3.6l.6 2.6 2.4 1.4 2.6-.8 1.8 3.1-2 1.8v2.8l2 1.8-1.8 3.1-2.6-.8-2.4 1.4-.6 2.6H9.2l-.6-2.6-2.4-1.4-2.6.8-1.8-3.1 2-1.8V9.6l-2-1.8 1.8-3.1 2.6.8 2.4-1.4z"/><circle cx="11" cy="11" r="3.3"/></svg>
<div class="a" style="left:0;top:1284px;width:297px;height:21px;background:rgba(200,225,240,.6);border-top-right-radius:4px"></div>
<div class="t" style="left:5px;top:1285px;font-size:13px;line-height:20px;letter-spacing:.2px;color:#3a3a3a">547admin.haiwaiym18.top/#/modo/agrupamento</div>
</body></html>
